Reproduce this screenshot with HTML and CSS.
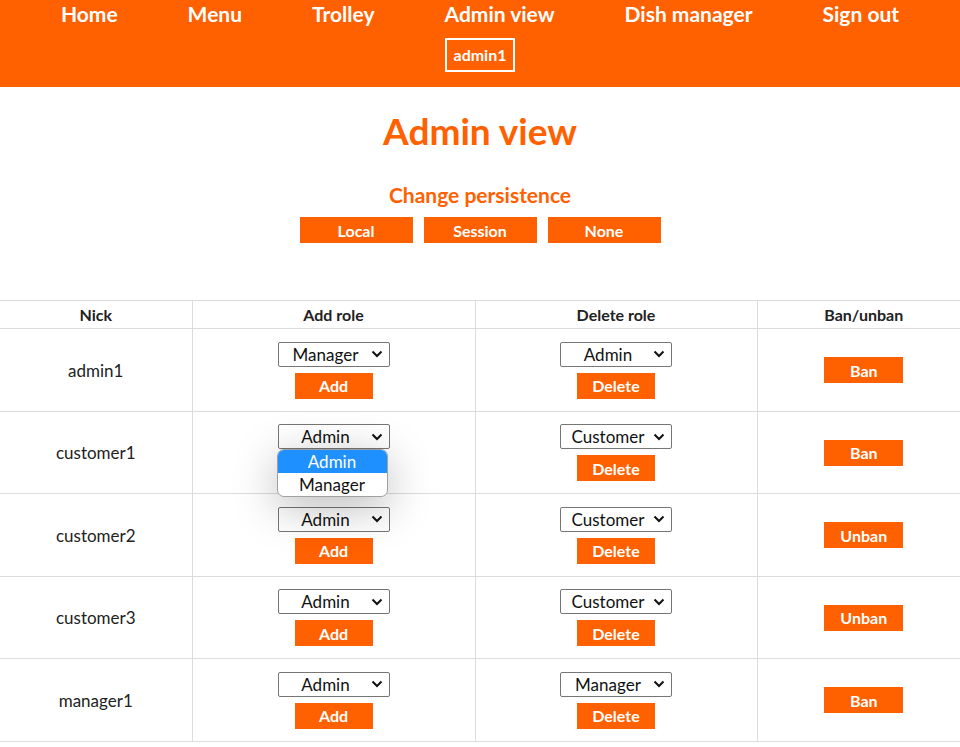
FILE: index.html
```html
<!DOCTYPE html>
<html>
<head>
<meta charset="utf-8">
<title>Admin view</title>
<link rel="stylesheet" href="styles.css">
</head>
<body>
<header class="topbar">
  <nav class="nav">
    <a class="nav-link">Home</a>
    <a class="nav-link">Menu</a>
    <a class="nav-link">Trolley</a>
    <a class="nav-link">Admin view</a>
    <a class="nav-link">Dish manager</a>
    <a class="nav-link">Sign out</a>
  </nav>
  <div class="user-row"><span class="user-badge">admin1</span></div>
</header>

<main class="main">
  <h1 class="title">Admin view</h1>
  <h2 class="subtitle">Change persistence</h2>
  <div class="persist">
    <button class="btn btn-persist">Local</button>
    <button class="btn btn-persist">Session</button>
    <button class="btn btn-persist">None</button>
  </div>

  <div class="table-wrap">
    <table class="users">
      <colgroup>
        <col class="c-nick"><col class="c-add"><col class="c-del"><col class="c-ban">
      </colgroup>
      <thead>
        <tr><th>Nick</th><th>Add role</th><th>Delete role</th><th>Ban/unban</th></tr>
      </thead>
      <tbody>
        <tr>
          <td>admin1</td>
          <td><div class="sel-wrap"><select class="sel"><option>Manager</option></select></div><button class="btn btn-row">Add</button></td>
          <td><div class="sel-wrap"><select class="sel"><option>Admin</option></select></div><button class="btn btn-row">Delete</button></td>
          <td><button class="btn btn-row">Ban</button></td>
        </tr>
        <tr>
          <td>customer1</td>
          <td><div class="sel-wrap"><select class="sel"><option>Admin</option></select>
            <div class="popup"><div class="opt opt-active">Admin</div><div class="opt">Manager</div></div></div><button class="btn btn-row">Add</button></td>
          <td><div class="sel-wrap"><select class="sel"><option>Customer</option></select></div><button class="btn btn-row">Delete</button></td>
          <td><button class="btn btn-row">Ban</button></td>
        </tr>
        <tr>
          <td>customer2</td>
          <td><div class="sel-wrap"><select class="sel"><option>Admin</option></select></div><button class="btn btn-row">Add</button></td>
          <td><div class="sel-wrap"><select class="sel"><option>Customer</option></select></div><button class="btn btn-row">Delete</button></td>
          <td><button class="btn btn-row">Unban</button></td>
        </tr>
        <tr>
          <td>customer3</td>
          <td><div class="sel-wrap"><select class="sel"><option>Admin</option></select></div><button class="btn btn-row">Add</button></td>
          <td><div class="sel-wrap"><select class="sel"><option>Customer</option></select></div><button class="btn btn-row">Delete</button></td>
          <td><button class="btn btn-row">Unban</button></td>
        </tr>
        <tr>
          <td>manager1</td>
          <td><div class="sel-wrap"><select class="sel"><option>Admin</option></select></div><button class="btn btn-row">Add</button></td>
          <td><div class="sel-wrap"><select class="sel"><option>Manager</option></select></div><button class="btn btn-row">Delete</button></td>
          <td><button class="btn btn-row">Ban</button></td>
        </tr>
      </tbody>
    </table>
  </div>
</main>
</body>
</html>
```
FILE: styles.css
```css
* { box-sizing: border-box; }
html, body { margin: 0; padding: 0; }
body {
  font-family: Lato, "Open Sans", sans-serif;
  color: #222;
  background: #fff;
  overflow-x: hidden;
}
.topbar {
  background: #ff6000;
  height: 87px;
}
.nav {
  display: flex;
  justify-content: center;
  gap: 70px;
  height: 30px;
}
.nav-link {
  color: #fff;
  font-weight: 700;
  font-size: 21px;
  line-height: 28px;
}
.user-row {
  display: flex;
  justify-content: center;
  padding-top: 8px;
}
.user-badge {
  display: inline-block;
  height: 34px;
  line-height: 30px;
  border: 2px solid #fff;
  padding: 0 7px;
  color: #fff;
  font-weight: 700;
  font-size: 16px;
}
.main { text-align: center; }
.title {
  margin: 22px 0 0;
  color: #ff6000;
  font-size: 37px;
  line-height: 44px;
  font-weight: 700;
}
.subtitle {
  margin: 29px 0 0;
  color: #ff6000;
  font-size: 21px;
  line-height: 25px;
  font-weight: 700;
}
.persist {
  display: flex;
  justify-content: center;
  gap: 11px;
  margin-top: 10px;
}
.btn {
  border: none;
  background: #ff6000;
  color: #fff;
  font-family: Lato, "Open Sans", sans-serif;
  font-weight: 700;
  font-size: 16px;
  padding: 0;
  height: 26px;
  cursor: pointer;
}
.btn-persist { width: 113px; }
.table-wrap {
  margin-top: 57px;
  width: 960px;
  overflow: hidden;
}
.users {
  border-collapse: collapse;
  width: 970px;
  table-layout: fixed;
}
.c-nick { width: 192px; }
.c-add { width: 283px; }
.c-del { width: 282px; }
.c-ban { width: 213px; }
.users th, .users td {
  border: 1px solid #dcdcdc;
  text-align: center;
  vertical-align: middle;
}
.users th:first-child, .users td:first-child { border-left: none; }
.users th:last-child, .users td:last-child { border-right: none; }
.users th {
  font-size: 16px;
  font-weight: 700;
  height: 28px;
  padding: 0;
}
.users td {
  font-size: 17px;
  padding: 12.6px 0 12px;
}
.sel-wrap {
  position: relative;
  width: 112px;
  margin: 0 auto;
}
.sel {
  display: block;
  width: 112px;
  height: 25px;
  -webkit-appearance: none;
  appearance: none;
  border: 1px solid #767676;
  border-radius: 2px;
  background: #fff url("data:image/svg+xml,%3Csvg xmlns='http://www.w3.org/2000/svg' width='12' height='8' viewBox='0 0 12 8'%3E%3Cpath d='M1.5 1.5 6 6l4.5-4.5' fill='none' stroke='%23111' stroke-width='2'/%3E%3C/svg%3E") no-repeat right 6px center;
  font-family: Lato, "Open Sans", sans-serif;
  font-size: 17px;
  color: #111;
  text-align: center;
  text-align-last: center;
  padding: 0 20px 0 4px;
}
.btn-row {
  display: block;
  margin: 6px auto 0;
  width: 78px;
}
.users td:last-child .btn-row { margin-top: 0; width: 79px; }
.popup {
  position: absolute;
  left: -1px;
  top: 25px;
  width: 111px;
  background: #fff;
  border: 1px solid #a0a0a0;
  border-radius: 7px;
  overflow: hidden;
  z-index: 5;
  box-shadow: 0 10px 45px rgba(0,0,0,0.28);
}
.opt {
  height: 23px;
  line-height: 23px;
  font-size: 17px;
  color: #111;
  text-align: center;
}
.opt-active {
  background: #1e90ff;
  color: #fff;
}
```
